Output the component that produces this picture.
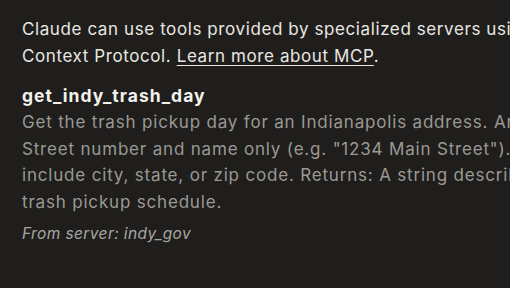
import React from "react";

function App() {
  return (
    <div
      className="h-[288px] w-[510px] overflow-hidden bg-[#1f1e1d] pl-[22px] pt-[16px]"
      style={{ fontFamily: "Inter, 'Noto Sans', sans-serif" }}
    >
      <div className="w-[680px]">
        {/* Intro */}
        <p className="whitespace-nowrap text-[17px] leading-[27px] tracking-[0.035em] text-[#e9e7e1]">
          Claude can use tools provided by specialized servers using Model
          <br />
          Context Protocol.{" "}
          <a className="underline decoration-1 underline-offset-[3px]">
            Learn more about MCP
          </a>
          .
        </p>

        {/* Tool */}
        <div className="mt-[12px]">
          <h3 className="text-[17.5px] font-bold leading-[27px] tracking-[0.06em] text-[#f3f1ec]">
            get_indy_trash_day
          </h3>
          <p className="whitespace-nowrap text-[17px] leading-[26.5px] tracking-[0.048em] text-[#9b9993]">
            Get the trash pickup day for an Indianapolis address. Args: address:
            <br />
            Street number and name only (e.g. "1234 Main Street"). Do not
            <br />
            include city, state, or zip code. Returns: A string describing the
            <br />
            trash pickup schedule.
          </p>
          <p className="mt-[8px] text-[15.5px] italic leading-[22px] tracking-[0.025em] text-[#a9a7a1]">
            From server: indy_gov
          </p>
        </div>
      </div>
    </div>
  );
}

export default App;
